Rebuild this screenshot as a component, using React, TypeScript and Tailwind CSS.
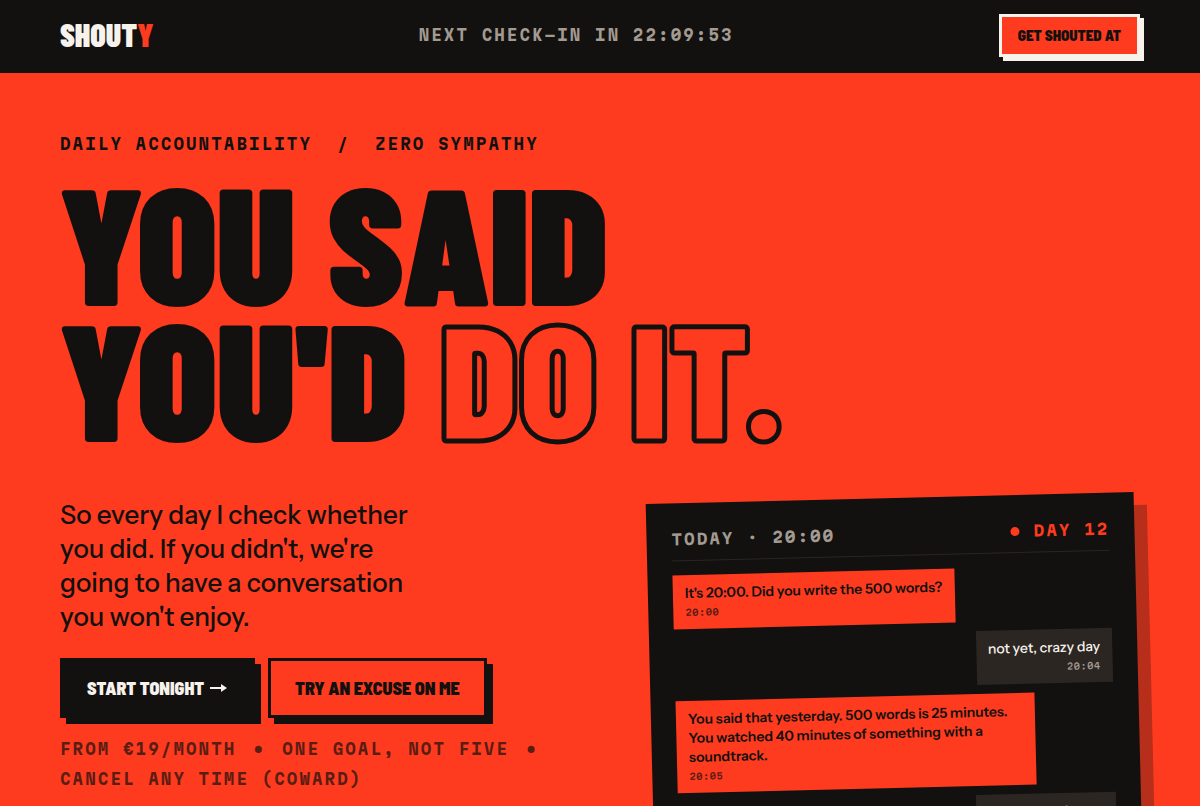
import type { ReactNode } from "react";

const mono = "font-['Martian_Mono','Roboto_Mono','Liberation_Mono',monospace]";
const caption = `${mono} text-[15px] font-bold uppercase tracking-[0.14em]`;
const headline = "font-['Barlow_Condensed','Roboto_Condensed',sans-serif] font-black uppercase";
const action = "font-['Barlow_Semi_Condensed','Fira_Sans_Condensed','Roboto_Condensed',sans-serif] font-black uppercase";

type Message = { from: "shouty" | "user"; time: string; text: string };

const messages: Message[] = [
  { from: "shouty", time: "20:00", text: "It's 20:00. Did you write the 500 words?" },
  { from: "user", time: "20:04", text: "not yet, crazy day" },
  {
    from: "shouty",
    time: "20:05",
    text: "You said that yesterday. 500 words is 25 minutes. You watched 40 minutes of something with a soundtrack.",
  },
  { from: "user", time: "20:06", text: "ok, starting it now" },
];

function Bubble({ message }: { message: Message }) {
  const fromUser = message.from === "user";
  return (
    <li
      className={`max-w-[82%] px-3 py-[9px] text-[14px] leading-[19px] ${
        fromUser
          ? "self-end bg-[#2b2622] font-medium text-[#f7f2ec]"
          : "self-start bg-[#ff3b1f] font-semibold text-[#12110f]"
      }`}
    >
      <p>{message.text}</p>
      <time
        className={`${mono} mt-0.5 block text-[9px] leading-[15px] tracking-wider ${
          fromUser ? "text-right text-[#a39a92]" : "opacity-70"
        }`}
      >
        {message.time}
      </time>
    </li>
  );
}

function Cta({ solid, href, children }: { solid?: boolean; href: string; children: ReactNode }) {
  return (
    <a
      href={href}
      className={`${action} flex h-[60px] items-center border-[3px] border-[#12110f] px-6 text-[18px] shadow-[6px_6px_0_#12110f] ${
        solid ? "bg-[#12110f] text-[#f7f2ec]" : "bg-[#ff3b1f] text-[#12110f]"
      }`}
    >
      {children}
    </a>
  );
}

export default function App() {
  return (
    <div className="min-h-screen overflow-x-hidden bg-[#ff3b1f] font-['Instrument_Sans','Inter',sans-serif] text-[#12110f]">
      <header className="flex h-[73px] items-center justify-between bg-[#12110f] px-[60px] pb-0.5">
        <a href="#top" className={`${headline} pb-1 text-[32px] leading-8 text-[#f7f2ec]`}>
          Shout<span className="text-[#ff3b1f]">y</span>
        </a>
        <p className={`${caption} text-[#a39a92]`}>Next check-in in 22:09:53</p>
        <a
          href="#start"
          className={`${action} flex h-[43px] items-center border-[3px] border-[#f7f2ec] bg-[#ff3b1f] px-4 text-[15px] shadow-[4px_4px_0_#f7f2ec]`}
        >
          Get shouted at
        </a>
      </header>

      <main id="top" className="px-[60px] pt-[59px] pb-20">
        <p className={`${caption} leading-6 whitespace-pre-wrap`}>{"Daily accountability  /  Zero sympathy"}</p>
        <h1 className={`${headline} mt-4 text-[163px] leading-[136px] [-webkit-text-stroke:2px_#12110f]`}>
          You said
          <br />
          You'd <span className="text-[#ff3b1f] [-webkit-text-stroke:5px_#12110f]">do it.</span>
        </h1>

        <div className="mt-[54px] grid grid-cols-[12fr_11fr] items-start gap-[60px]">
          <div>
            <p className="max-w-[380px] text-[26px] leading-[34px] font-medium">
              So every day I check whether you did. If you didn't, we're going to have a conversation you won't enjoy.
            </p>
            <div className="mt-6 flex gap-[13px]">
              <Cta href="#start" solid>
                Start tonight
                <svg viewBox="0 0 18 12" className="ml-1.5 h-3 w-[18px]" aria-hidden="true">
                  <path d="M0 6h13" stroke="currentColor" strokeWidth="2" />
                  <path d="M11 2l6 4-6 4z" fill="currentColor" />
                </svg>
              </Cta>
              <Cta href="#excuses">Try an excuse on me</Cta>
            </div>
            <p className={`${caption} mt-4 leading-[30px] opacity-70`}>
              From €19/month <span className="px-1">•</span> One goal, not five <span className="px-1">•</span> Cancel
              any time (coward)
            </p>
          </div>

          <section className="min-h-[524px] rotate-[-1.4deg] bg-[#12110f] px-[25px] pt-[25px] pb-6 shadow-[13px_13px_0_rgba(18,17,15,0.3)]">
            <div className={`${caption} flex justify-between border-b border-[#2b2622] pb-2.5 leading-[22px]`}>
              <p className="text-[#a39a92]">Today · 20:00</p>
              <p className="flex items-center text-[#ff3b1f]">
                <span className="mr-3.5 size-[9px] rounded-full bg-[#ff3b1f]" />
                Day 12
              </p>
            </div>
            <ul className="mt-3.5 flex flex-col gap-[9px]">
              {messages.map((m) => (
                <Bubble key={m.time} message={m} />
              ))}
            </ul>
          </section>
        </div>
      </main>
    </div>
  );
}
